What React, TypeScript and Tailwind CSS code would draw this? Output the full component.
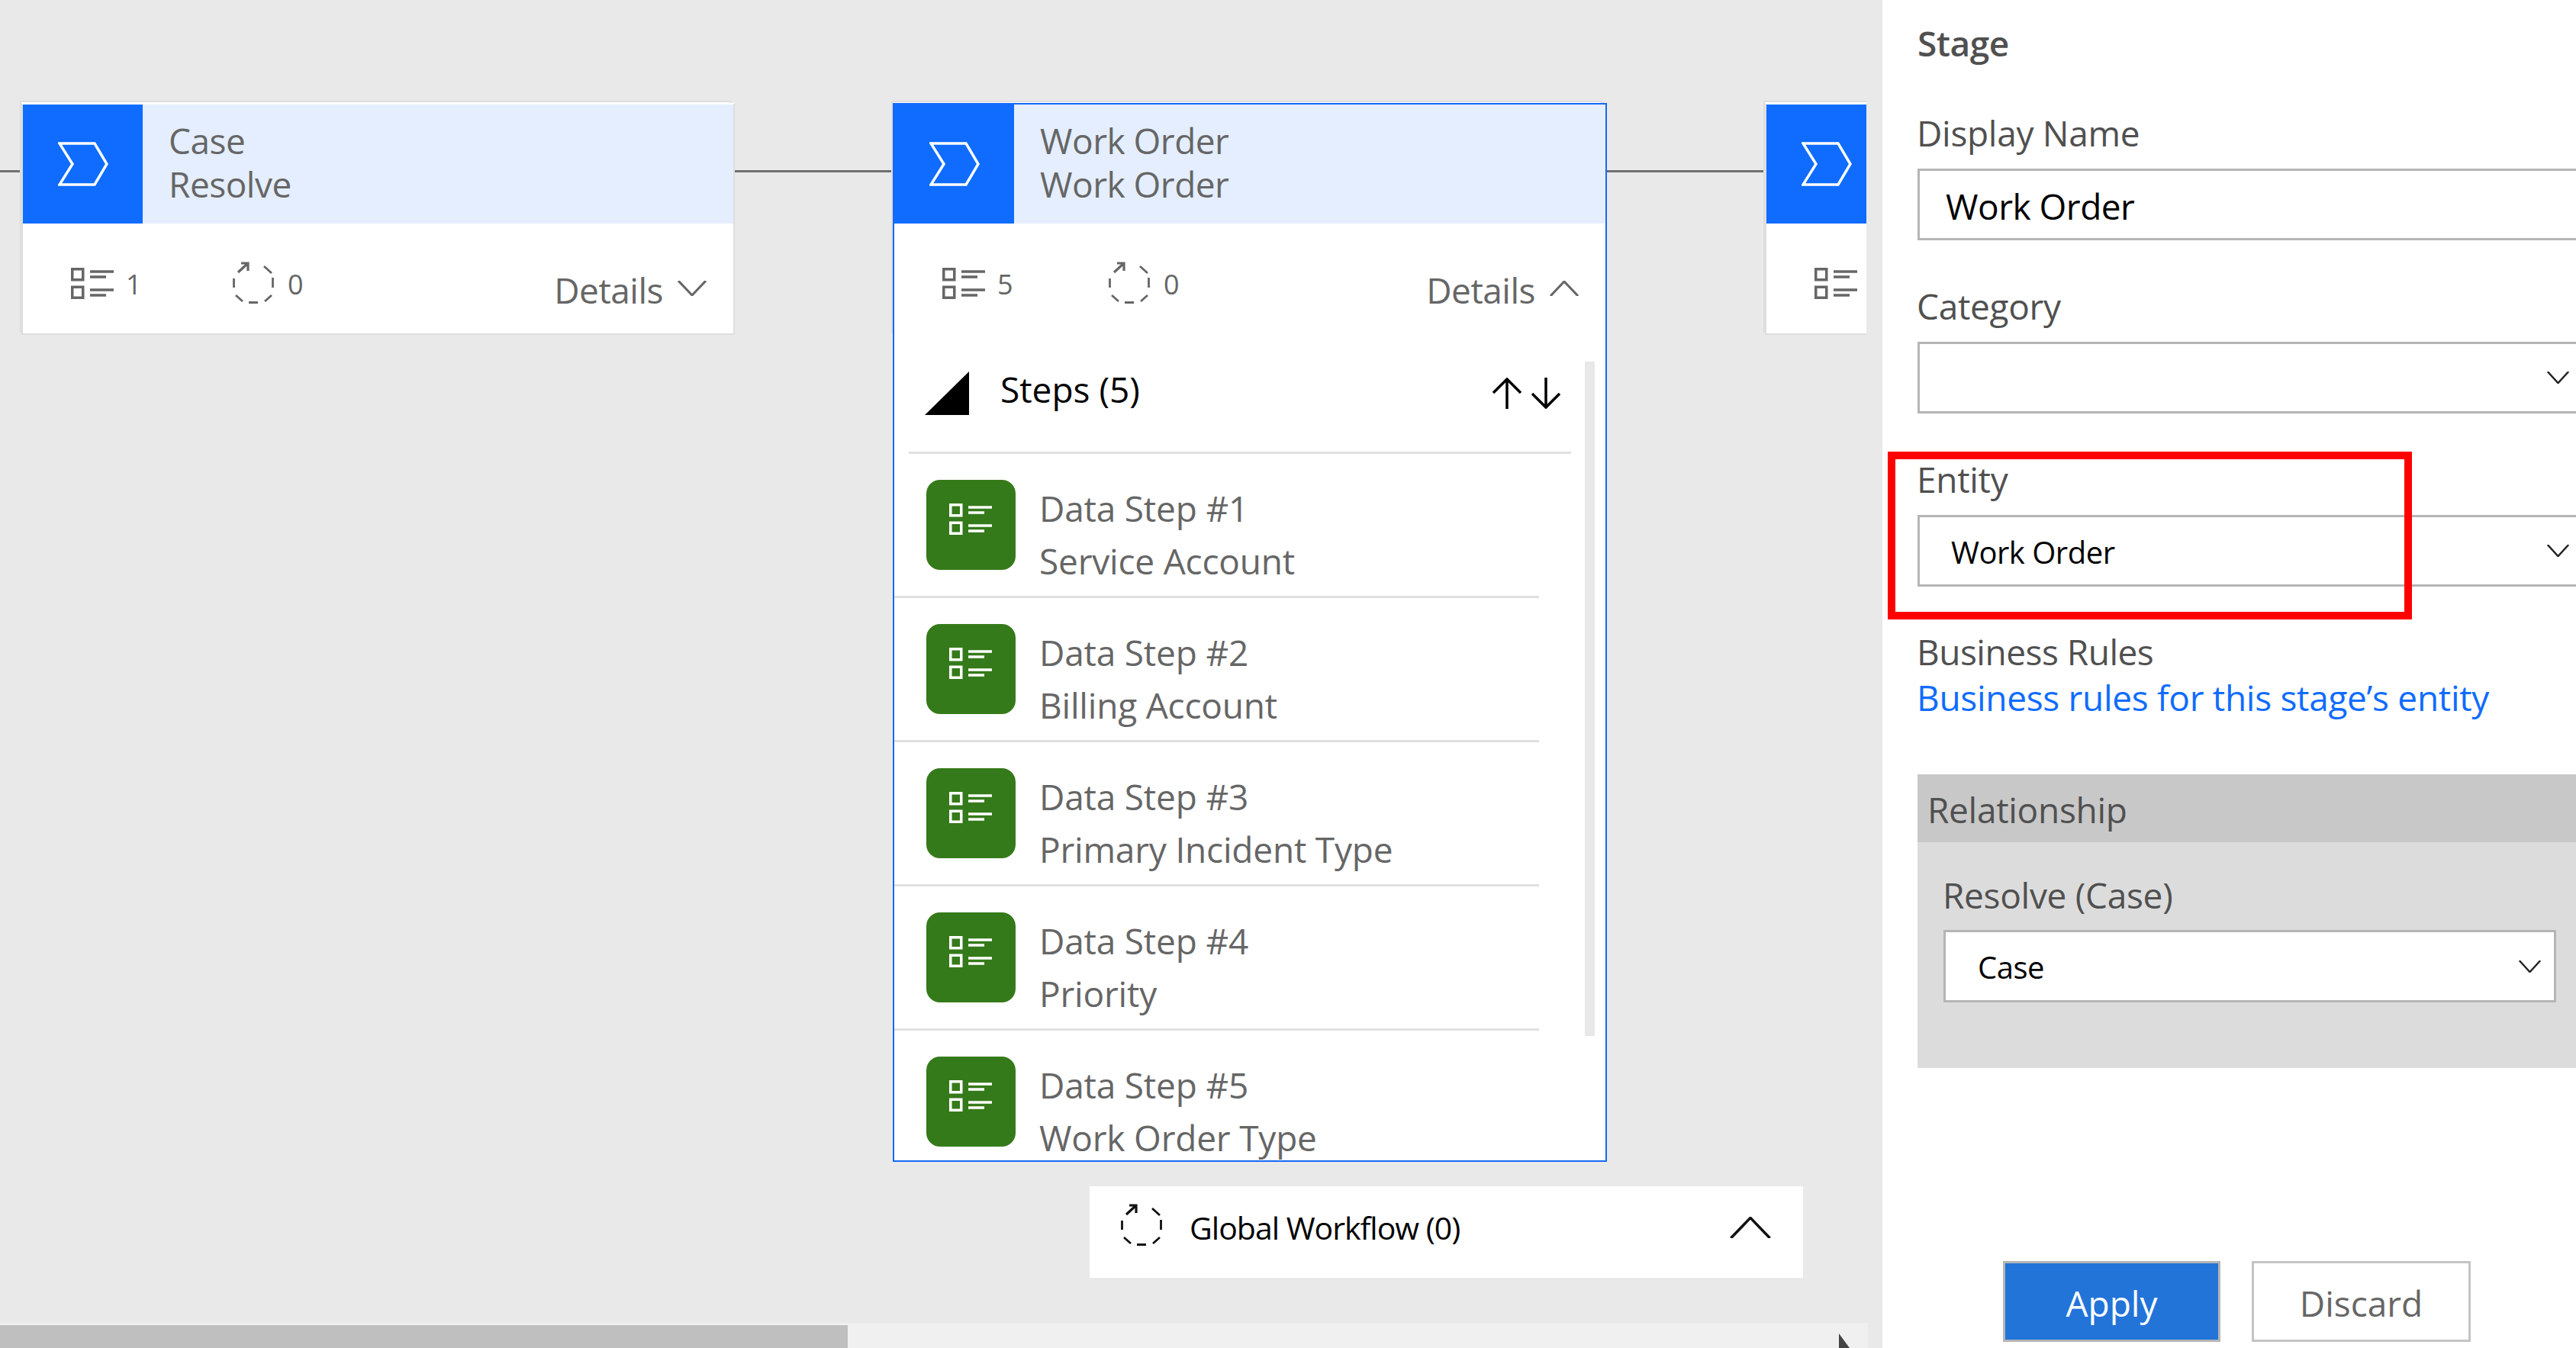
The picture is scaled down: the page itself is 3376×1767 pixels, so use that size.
import type { ReactNode } from 'react'

const font = { fontFamily: '"Open Sans", "Noto Sans", sans-serif' }

function StageIcon() {
  return (
    <svg viewBox="0 0 66 58" className="w-[66px] h-[58px]" fill="none">
      <path d="M2 2H48L64 29L48 56H2L19 29Z" stroke="#fff" strokeWidth="3.5" />
    </svg>
  )
}

function ListIcon({ color }: { color: string }) {
  return (
    <svg viewBox="0 0 56 41" className="w-[56px] h-[41px] shrink-0" fill="none" stroke={color} strokeWidth="3.5">
      <rect x="1.75" y="1.75" width="14" height="14" />
      <rect x="1.75" y="25.25" width="14" height="14" />
      <path d="M25 5H56M25 12H46M25 29H56M25 36H46" />
    </svg>
  )
}

function WorkflowIcon({ color }: { color: string }) {
  return (
    <svg viewBox="0 0 54 55" className="w-[54px] h-[55px] shrink-0" fill="none" stroke={color} strokeWidth="2.8">
      <path d="M41 6L51 15M52.500 21V34M51 44L42 52M21 53.500H33M4 44L13 52M1.500 22V34" />
      <path d="M11 2H20V12M20 2L7 14" strokeWidth="3.2" />
    </svg>
  )
}

function Chevron({ up, className, color, sw = 3 }: { up?: boolean; className: string; color: string; sw?: number }) {
  return (
    <svg viewBox="0 0 38 20" preserveAspectRatio="none" className={className} fill="none" stroke={color} strokeWidth={sw}>
      <path d={up ? 'M1 20L19 1L37 20' : 'M1 0L19 19L37 0'} />
    </svg>
  )
}

function StageHeader({ title, sub }: { title?: string; sub?: string }) {
  return (
    <div className="flex h-[156px] shrink-0 bg-[#e4eeff]">
      <div className="flex w-[157px] shrink-0 items-center justify-center bg-[#0f6cff]">
        <StageIcon />
      </div>
      {title && (
        <div className="pl-[34px] pt-[19px] text-[46px] leading-[57px] tracking-[-0.5px] text-[#666] whitespace-nowrap">
          <div>{title}</div>
          <div>{sub}</div>
        </div>
      )}
    </div>
  )
}

function StageCard({
  title,
  sub,
  steps,
  statGap,
  active,
  open,
  className,
  children,
}: {
  title: string
  sub: string
  steps: string
  statGap: string
  active?: boolean
  open?: boolean
  className: string
  children?: ReactNode
}) {
  return (
    <div className={`absolute ${className}`}>
      <div className="absolute -left-[2px] -top-[3px] w-[932px] h-[304px] bg-white border-2 border-[#dedede]" />
      <div className={`relative flex flex-col h-full w-full overflow-hidden bg-white border-2 ${active ? 'border-[#1569f5]' : 'border-[#dedede] border-t-white'}`}>
        <StageHeader title={title} sub={sub} />
        <div className={`flex shrink-0 items-start pl-[63px] pr-[35px] ${open ? 'h-[181px]' : 'h-[144px]'}`}>
          <div className={`flex items-start ${statGap} shrink-0`}>
            <div className="mt-[58px]">
              <ListIcon color="#666" />
            </div>
            <span className="ml-[16px] mt-[60px] text-[36px] font-medium leading-[40px] text-[#666]">{steps}</span>
          </div>
          <div className="mt-[50px]">
            <WorkflowIcon color="#666" />
          </div>
          <span className="ml-[18px] mt-[60px] text-[36px] font-medium leading-[40px] text-[#666]">0</span>
          <div className="ml-auto flex items-start shrink-0">
            <span className="mt-[59px] text-[46px] leading-[56px] tracking-[-0.5px] text-[#666]">Details</span>
            <Chevron up={open} color="#666" className="ml-[19px] mt-[75px] w-[38px] h-[20px]" />
          </div>
        </div>
        {children}
      </div>
    </div>
  )
}

// third stage runs under the side panel, only its left end shows
function CutOffCard() {
  return (
    <div className="absolute left-[2313px] top-[135px] h-[304px] w-[935px]">
      <div className="absolute -left-[2px] -top-[3px] w-[932px] h-[304px] bg-white border-2 border-[#dedede]" />
      <div className="relative flex h-full w-full flex-col overflow-hidden border-2 border-[#dedede] border-t-white bg-white">
        <StageHeader />
        <div className="pl-[63px] pt-[58px]">
          <ListIcon color="#666" />
        </div>
      </div>
    </div>
  )
}

const dataSteps = [
  ['Data Step #1', 'Service Account'],
  ['Data Step #2', 'Billing Account'],
  ['Data Step #3', 'Primary Incident Type'],
  ['Data Step #4', 'Priority'],
  ['Data Step #5', 'Work Order Type'],
]

function StepsList() {
  return (
    <div className="relative flex-1 overflow-hidden">
      <div className="absolute right-[14px] top-0 w-[13px] h-[884px] bg-[#e8e8e8]" />
      <div className="mx-[19px] flex h-[121px] w-[868px] items-start border-b-[3px] border-[#e0e0e0]">
        <div className="ml-[21px] mt-[13px] w-[58px] h-[57px] bg-black [clip-path:polygon(100%_0,100%_100%,0_100%)]" />
        <span className="ml-[41px] mt-[6px] text-[46px] leading-[60px] text-black">Steps (5)</span>
        <svg viewBox="0 0 90 41" className="ml-auto mr-[13px] mt-[21px] w-[90px] h-[41px]" fill="none" stroke="#000" strokeWidth="3.5">
          <path d="M19 41V2M1 20L19 2L37 20M70 0V39M52 21L70 39L88 21" />
        </svg>
      </div>
      {dataSteps.map(([name, field]) => (
        <div key={name} className="flex h-[189px] w-[845px] items-start border-b-[3px] border-[#e0e0e0] pl-[42px] pt-[34px]">
          <div className="flex w-[117px] h-[118px] shrink-0 items-start justify-start rounded-[18px] bg-[#357a1a] pl-[30px] pt-[31px]">
            <ListIcon color="#fff" />
          </div>
          <div className="ml-[31px] mt-[3px] text-[46px] leading-[69px] tracking-[-0.2px] text-[#666] whitespace-nowrap">
            <div>{name}</div>
            <div>{field}</div>
          </div>
        </div>
      ))}
    </div>
  )
}

function Label({ children, className = '' }: { children: ReactNode; className?: string }) {
  return <div className={`-ml-[1px] h-[60px] text-[46px] leading-[60px] tracking-[-0.3px] text-[#505050] ${className}`}>{children}</div>
}

function Select({ value }: { value?: string }) {
  return (
    <div className="mt-[17px] flex h-[94px] w-[880px] items-center justify-between border-[3px] border-[#b5b5b5] bg-white pl-[41px] pr-[23px]">
      <span className="pt-[3px] text-[40px] tracking-[-0.5px] text-black">{value}</span>
      <Chevron color="#222" className="w-[29px] h-[16px]" />
    </div>
  )
}

export default function App() {
  return (
    <div style={font} className="flex h-[1767px] w-[3376px] overflow-hidden bg-[#e9e9e9]">
      <div className="flex w-[2467px] shrink-0 flex-col">
        <div className="relative w-[2446px] flex-1 overflow-hidden">
          <div className="absolute left-0 top-[223px] h-[3px] w-[2320px] bg-[#707070]" />
          <StageCard title="Case" sub="Resolve" steps="1" statGap="w-[212px]" className="left-[28px] top-[135px] w-[935px] h-[304px]" />
          <StageCard
            title="Work Order"
            sub="Work Order"
            steps="5"
            statGap="w-[218px]"
            active
            open
            className="left-[1170px] top-[135px] w-[936px] h-[1388px]"
          >
            <StepsList />
          </StageCard>
          <CutOffCard />

          <div className="absolute left-[1428px] top-[1555px] flex h-[120px] w-[935px] items-start bg-white pl-[41px] pt-[23px]">
            <WorkflowIcon color="#111" />
            <span className="ml-[36px] mt-[3px] text-[41px] leading-[56px] tracking-[-1px] text-black">Global Workflow (0)</span>
            <Chevron up color="#111" sw={2.5} className="ml-auto mr-[42px] mt-[17px] w-[54px] h-[28px]" />
          </div>
        </div>
        <div className="flex h-[33px] w-[2448px] shrink-0 items-end bg-[#f0f0f0]">
          <div className="h-[30px] w-[1111px] bg-[#bfbfbf]" />
          <div className="ml-auto mr-[24px] h-[19px] w-[14px] bg-[#444] [clip-path:polygon(0_0,100%_100%,0_100%)]" />
        </div>
      </div>

      <div className="relative flex min-w-0 flex-1 flex-col overflow-hidden bg-white pl-[46px] pb-[8px] pt-[26px]">
        <div className="h-[60px] text-[46px] font-semibold leading-[60px] tracking-[-0.5px] text-[#505050]">Stage</div>
        <Label className="mt-[58px]">Display Name</Label>
        <div className="mt-[17px] flex h-[94px] w-[880px] shrink-0 items-center border-[3px] border-[#b5b5b5] pl-[34px] pt-[4px] text-[46px] tracking-[-0.5px] text-black">
          Work Order
        </div>
        <Label className="mt-[56px]">Category</Label>
        <Select />
        <Label className="mt-[56px]">Entity</Label>
        <Select value="Work Order" />
        <Label className="mt-[55px] tracking-[-0.5px]">Business Rules</Label>
        <div className="-ml-[1px] h-[60px] text-[46px] leading-[60px] tracking-[-0.3px] text-[#0f6cff] whitespace-nowrap">
          Business rules for this stage’s entity
        </div>

        <div className="mt-[71px] h-[385px] w-[880px] shrink-0 bg-[#dcdcdc]">
          <div className="h-[89px] bg-[#c8c8c8] pl-[13px] pt-[3px] text-[46px] leading-[86px] tracking-[-0.3px] text-[#505050]">Relationship</div>
          <div className="pl-[34px] pt-[39px]">
            <div className="-ml-[1px] h-[60px] text-[46px] leading-[60px] tracking-[-0.3px] text-[#505050]">Resolve (Case)</div>
            <div className="mt-[16px] flex h-[95px] w-[803px] items-center justify-between border-[3px] border-[#b5b5b5] bg-white pl-[42px] pr-[17px]">
              <span className="pt-[3px] text-[40px] tracking-[-0.5px] text-black">Case</span>
              <Chevron color="#222" className="w-[29px] h-[16px]" />
            </div>
          </div>
        </div>

        <div className="mt-auto ml-[112px] flex gap-[41px]">
          <button className="h-[106px] w-[285px] border-[3px] border-[#b5b5b5] bg-[#2274d8] pt-[5px] text-[46px] text-white">Apply</button>
          <button className="h-[106px] w-[287px] border-[3px] border-[#c4c4c4] bg-white pt-[5px] text-[46px] text-[#666]">Discard</button>
        </div>

        <div className="absolute left-[7px] top-[592px] h-[220px] w-[687px] border-[10px] border-[#ff0000]" />
      </div>
    </div>
  )
}
